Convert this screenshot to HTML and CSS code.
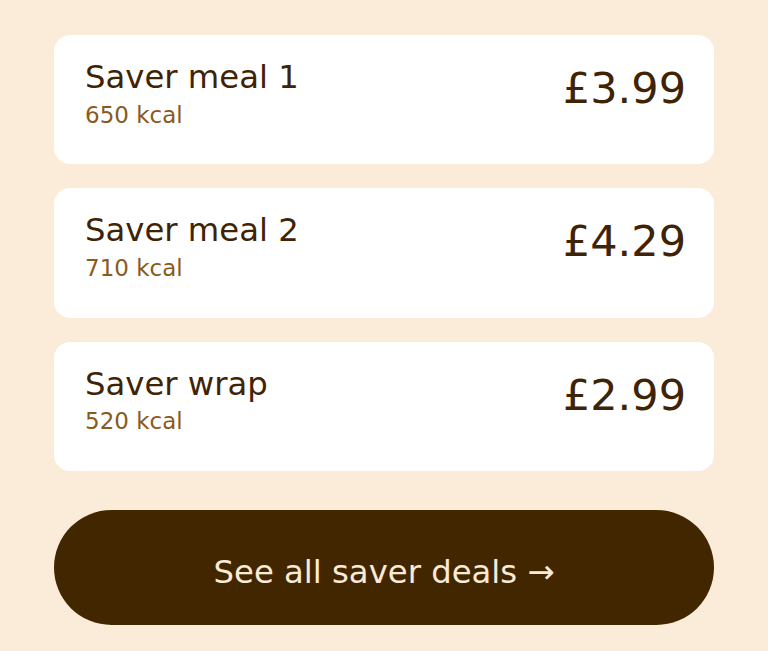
FILE: index.html
```html
<!DOCTYPE html>
<html lang="en">
<head>
    <meta charset="UTF-8">
    <meta name="viewport" content="width=device-width, initial-scale=1.0">
    <title>Saver deals</title>
    <link rel="stylesheet" href="styles.css">
</head>
<body>
    <div class="deals">
        <div class="deal">
            <div class="info">
                <div class="name">Saver meal 1</div>
                <div class="kcal">650 kcal</div>
            </div>
            <div class="price">£3.99</div>
        </div>
        <div class="deal">
            <div class="info">
                <div class="name">Saver meal 2</div>
                <div class="kcal">710 kcal</div>
            </div>
            <div class="price">£4.29</div>
        </div>
        <div class="deal">
            <div class="info">
                <div class="name">Saver wrap</div>
                <div class="kcal">520 kcal</div>
            </div>
            <div class="price">£2.99</div>
        </div>
        <button class="all">See all saver deals →</button>
    </div>
</body>
</html>
```

FILE: styles.css
```css
*{
    box-sizing: border-box;
}
body{
    margin: 0;
    background: #faecd9;
    font-family: "DejaVu Sans", sans-serif;
    color: #3f2305;
}
.deals{
    display: flex;
    flex-direction: column;
    gap: 24px;
    padding: 35px 54px 26px;
}
.deal{
    display: flex;
    justify-content: space-between;
    align-items: flex-start;
    background: #fff;
    border-radius: 16px;
    padding: 23px 28px 35.4px 31px;
}
.name{
    font-size: 32.3px;
    line-height: 38px;
}
.kcal{
    font-size: 23px;
    line-height: 1.2;
    margin-top: 5.5px;
    color: #8a5a1c;
}
.price{
    font-size: 43px;
    line-height: 1.2;
    margin-top: 5px;
}
.all{
    margin-top: 15px;
    height: 115px;
    padding: 43px 0 34px;
    border: none;
    border-radius: 999px;
    background: #422600;
    color: #faebd7;
    font-family: "DejaVu Sans", sans-serif;
    font-size: 32.3px;
    line-height: 38px;
}
```
